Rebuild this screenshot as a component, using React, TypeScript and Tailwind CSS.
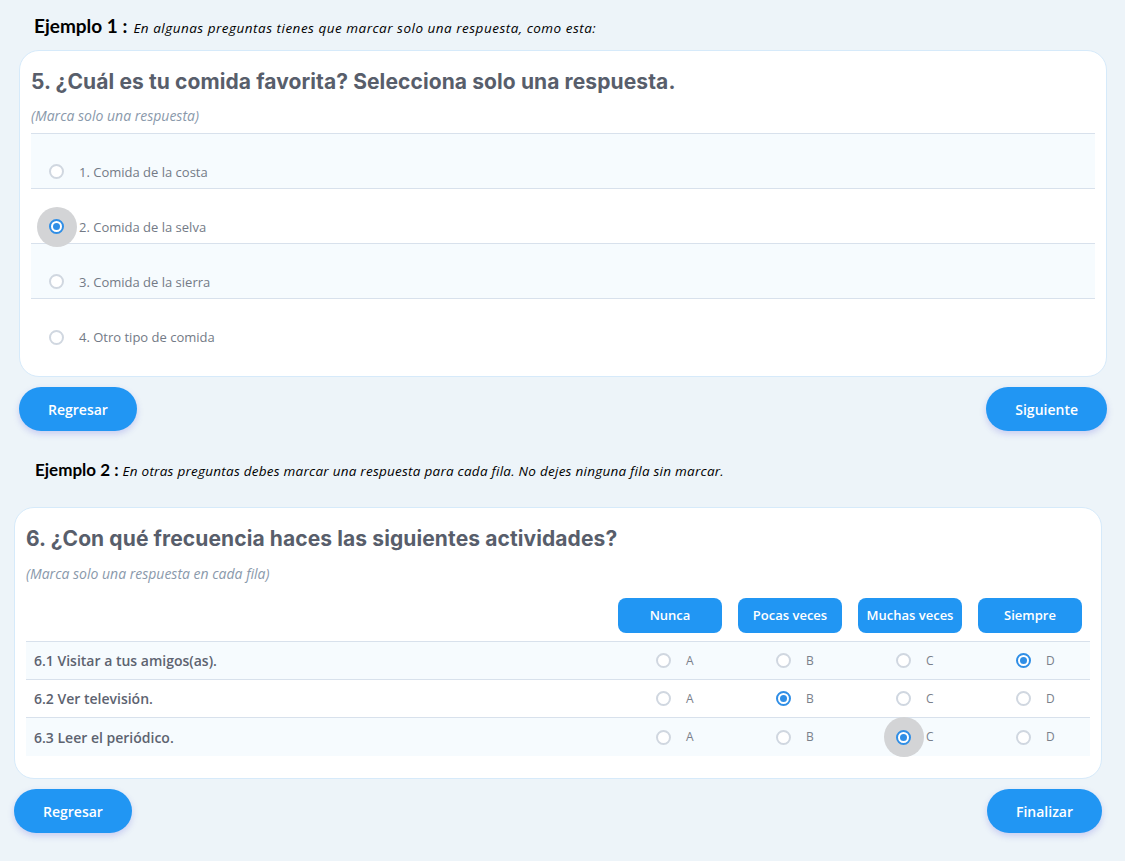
import React from "react";

const sans = { fontFamily: '"Open Sans", "Noto Sans", sans-serif' };

function Radio({ checked, halo }: { checked?: boolean; halo?: boolean }) {
  return (
    <span className="relative inline-flex h-[15px] w-[15px] shrink-0 items-center justify-center">
      {halo && (
        <span className="absolute left-1/2 top-1/2 h-[40px] w-[40px] -translate-x-1/2 -translate-y-1/2 rounded-full bg-[#d3d4d6]" />
      )}
      <span
        className={
          "relative flex h-[15px] w-[15px] items-center justify-center rounded-full border-2 bg-white " +
          (checked ? "border-[#2f8ee6]" : "border-[#d0d7e0]")
        }
      >
        {checked && <span className="h-[7px] w-[7px] rounded-full bg-[#2f8ee6]" />}
      </span>
    </span>
  );
}

function PillButton({ children }: { children: React.ReactNode }) {
  return (
    <button
      className="flex h-[44px] items-center justify-center rounded-full bg-[#2196f3] px-[29px] text-[14px] font-semibold text-white shadow-[0_3px_6px_rgba(90,90,220,0.25)]"
      style={sans}
    >
      {children}
    </button>
  );
}

const options = [
  "1. Comida de la costa",
  "2. Comida de la selva",
  "3. Comida de la sierra",
  "4. Otro tipo de comida",
];

const rows = [
  { label: "6.1 Visitar a tus amigos(as).", sel: 3, halo: false },
  { label: "6.2 Ver televisión.", sel: 1, halo: false },
  { label: "6.3 Leer el periódico.", sel: 2, halo: true },
];

const cols = ["Nunca", "Pocas veces", "Muchas veces", "Siempre"];
const letters = ["A", "B", "C", "D"];

const lato = { fontFamily: 'Lato, "Open Sans", sans-serif' };

export default function App() {
  return (
    <div className="min-h-[861px] w-[1125px] bg-[#edf4f9] pb-[27px]" style={sans}>
      {/* Example 1 */}
      <div className="flex items-baseline gap-[6px] pl-[34px] pt-[15px] leading-[22px] text-black">
        <span className="text-[19px] font-bold" style={lato}>
          Ejemplo 1 :
        </span>
        <span className="text-[13.5px] italic tracking-[0.5px]">
          En algunas preguntas tienes que marcar solo una respuesta, como esta:
        </span>
      </div>
      <div className="ml-[19px] mr-[18px] mt-[11px] rounded-[20px] border border-[#d6eafa] bg-white px-[11px] pb-[22px] pt-[16px]">
        <h2
          className="text-[21px] font-bold leading-[30px] text-[#585e6b]"
          style={{ fontFamily: 'Inter, "Noto Sans", sans-serif', letterSpacing: "0.1px" }}
        >
          5. ¿Cuál es tu comida favorita? Selecciona solo una respuesta.
        </h2>
        <p className="mt-[9px] text-[14px] italic leading-[20px] text-[#8a99ab]">(Marca solo una respuesta)</p>
        <div className="mt-[7px] border-t border-[#d8e1ec]">
          {options.map((o, i) => (
            <div
              key={o}
              className={
                "flex h-[55px] items-center border-b border-[#d8e1ec] pl-[18px] pt-[21px] last:border-b-0 " +
                (i % 2 === 0 ? "bg-[#f6fbfe]" : "bg-white")
              }
            >
              <Radio checked={i === 1} halo={i === 1} />
              <span className="relative ml-[15px] text-[13px] leading-[18px] text-[#737a86]">{o}</span>
            </div>
          ))}
        </div>
      </div>
      <div className="ml-[19px] mr-[18px] mt-[10px] flex justify-between">
        <PillButton>Regresar</PillButton>
        <PillButton>Siguiente</PillButton>
      </div>

      {/* Example 2 */}
      <div className="flex items-baseline gap-[4px] pl-[35px] pt-[28px] leading-[22px] text-black">
        <span className="text-[17px] font-bold" style={lato}>
          Ejemplo 2 :
        </span>
        <span className="text-[13.5px] italic tracking-[0.25px]">
          En otras preguntas debes marcar una respuesta para cada fila. No dejes ninguna fila sin marcar.
        </span>
      </div>
      <div className="ml-[14px] mr-[23px] mt-[25px] rounded-[20px] border border-[#d6eafa] bg-white px-[11px] pb-[22px] pt-[16px]">
        <h2
          className="text-[21px] font-bold leading-[30px] text-[#585e6b]"
          style={{ fontFamily: 'Inter, "Noto Sans", sans-serif', letterSpacing: "0.1px" }}
        >
          6. ¿Con qué frecuencia haces las siguientes actividades?
        </h2>
        <p className="mt-[10px] text-[14px] italic leading-[20px] text-[#8a99ab]">(Marca solo una respuesta en cada fila)</p>
        <div className="mt-[14px] grid grid-cols-[1fr_120px_120px_120px_120px] pb-[8px]">
          <div />
          {cols.map((c) => (
            <div key={c} className="flex justify-center">
              <div className="flex h-[35px] w-[104px] items-center justify-center rounded-[8px] bg-[#2196f3] text-[13px] font-semibold text-white">
                {c}
              </div>
            </div>
          ))}
        </div>
        <div className="border-t border-[#d8e1ec]">
          {rows.map((r, i) => (
            <div
              key={r.label}
              className={
                "grid h-[38px] grid-cols-[1fr_120px_120px_120px_120px] items-center " +
                (i < rows.length - 1 ? "border-b border-[#d8e1ec] " : "") +
                (i % 2 === 0 ? "bg-[#f6fbfe]" : "bg-white")
              }
            >
              <span className="pl-[8px] text-[14px] font-semibold text-[#5d6370]">{r.label}</span>
              {letters.map((l, j) => (
                <div key={l} className="flex items-center pl-[46px]">
                  <Radio checked={r.sel === j} halo={r.halo && r.sel === j} />
                  <span className="relative ml-[15px] text-[12px] text-[#7a808b]">{l}</span>
                </div>
              ))}
            </div>
          ))}
        </div>
      </div>
      <div className="ml-[14px] mr-[23px] mt-[10px] flex justify-between">
        <PillButton>Regresar</PillButton>
        <PillButton>Finalizar</PillButton>
      </div>
    </div>
  );
}
